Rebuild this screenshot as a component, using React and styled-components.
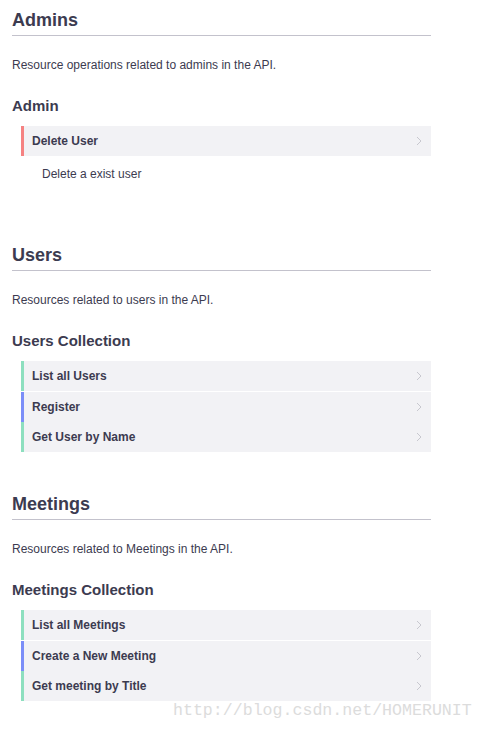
import React from "react";
import styled, { createGlobalStyle } from "styled-components";

const Global = createGlobalStyle`
  html, body { margin: 0; padding: 0; background: #ffffff; }
  body { font-family: "Liberation Sans", Arial, sans-serif; color: #3c3b50; }
`;

const Page = styled.div`
  position: relative;
  width: 485px;
  min-height: 732px;
  padding: 9px 0 0 12px;
  box-sizing: border-box;
`;

const Content = styled.div`
  width: 419px;
`;

const Section = styled.section`
  display: flow-root;
  margin-bottom: 41px;
`;

const Heading = styled.h2`
  margin: 0;
  font-size: 18px;
  line-height: 22px;
  font-weight: 700;
  color: #3c3b50;
  padding-bottom: 4px;
  border-bottom: 1px solid #c3c2cc;
`;

const Lead = styled.p`
  margin: 21px 0 0;
  font-size: 12px;
  line-height: 16px;
  color: #3c3b50;
`;

const SubHeading = styled.h3`
  margin: 24px 0 0;
  font-size: 15px;
  line-height: 18px;
  font-weight: 700;
  color: #3c3b50;
`;

const List = styled.div`
  margin: 11px 0 0 9px;
  display: flex;
  flex-direction: column;
  gap: 0.5px;
`;

const Row = styled.div`
  display: flex;
  align-items: center;
  height: 30px;
  background: #f2f2f5;
  border-left: 3px solid ${(p) => p.$color};
  padding: 0 9px 0 8px;
  font-size: 12px;
  font-weight: 700;
  color: #3c3b50;
`;

const RowLabel = styled.span`
  flex: 1;
`;

const Note = styled.p`
  margin: 10px 0 21px 30px;
  font-size: 12px;
  line-height: 16px;
  color: #3c3b50;
`;

const Watermark = styled.div`
  position: absolute;
  left: 173px;
  top: 700px;
  font-family: "Liberation Mono", "DejaVu Sans Mono", monospace;
  font-size: 16.6px;
  line-height: 22px;
  color: #dcdcdc;
  pointer-events: none;
`;

const COLORS = { red: "#f58282", green: "#8ddfbf", blue: "#7b8ef8" };

const Chevron = () => (
  <svg width="6" height="10" viewBox="0 0 6 10" aria-hidden="true">
    <polyline points="1,1 5,5 1,9" fill="none" stroke="#c8c8cf" strokeWidth="1" />
  </svg>
);

const Op = ({ label, color }) => (
  <Row $color={COLORS[color]}>
    <RowLabel>{label}</RowLabel>
    <Chevron />
  </Row>
);

const sections = [
  {
    title: "Admins",
    lead: "Resource operations related to admins in the API.",
    sub: "Admin",
    ops: [{ label: "Delete User", color: "red" }],
    note: "Delete a exist user",
  },
  {
    title: "Users",
    lead: "Resources related to users in the API.",
    sub: "Users Collection",
    ops: [
      { label: "List all Users", color: "green" },
      { label: "Register", color: "blue" },
      { label: "Get User by Name", color: "green" },
    ],
  },
  {
    title: "Meetings",
    lead: "Resources related to Meetings in the API.",
    sub: "Meetings Collection",
    ops: [
      { label: "List all Meetings", color: "green" },
      { label: "Create a New Meeting", color: "blue" },
      { label: "Get meeting by Title", color: "green" },
    ],
  },
];

export default function App() {
  return (
    <>
      <Global />
      <Page>
        <Content>
          {sections.map((s) => (
            <Section key={s.title}>
              <Heading>{s.title}</Heading>
              <Lead>{s.lead}</Lead>
              <SubHeading>{s.sub}</SubHeading>
              <List>
                {s.ops.map((o) => (
                  <Op key={o.label} {...o} />
                ))}
              </List>
              {s.note && <Note>{s.note}</Note>}
            </Section>
          ))}
        </Content>
        <Watermark>http://blog.csdn.net/HOMERUNIT</Watermark>
      </Page>
    </>
  );
}
